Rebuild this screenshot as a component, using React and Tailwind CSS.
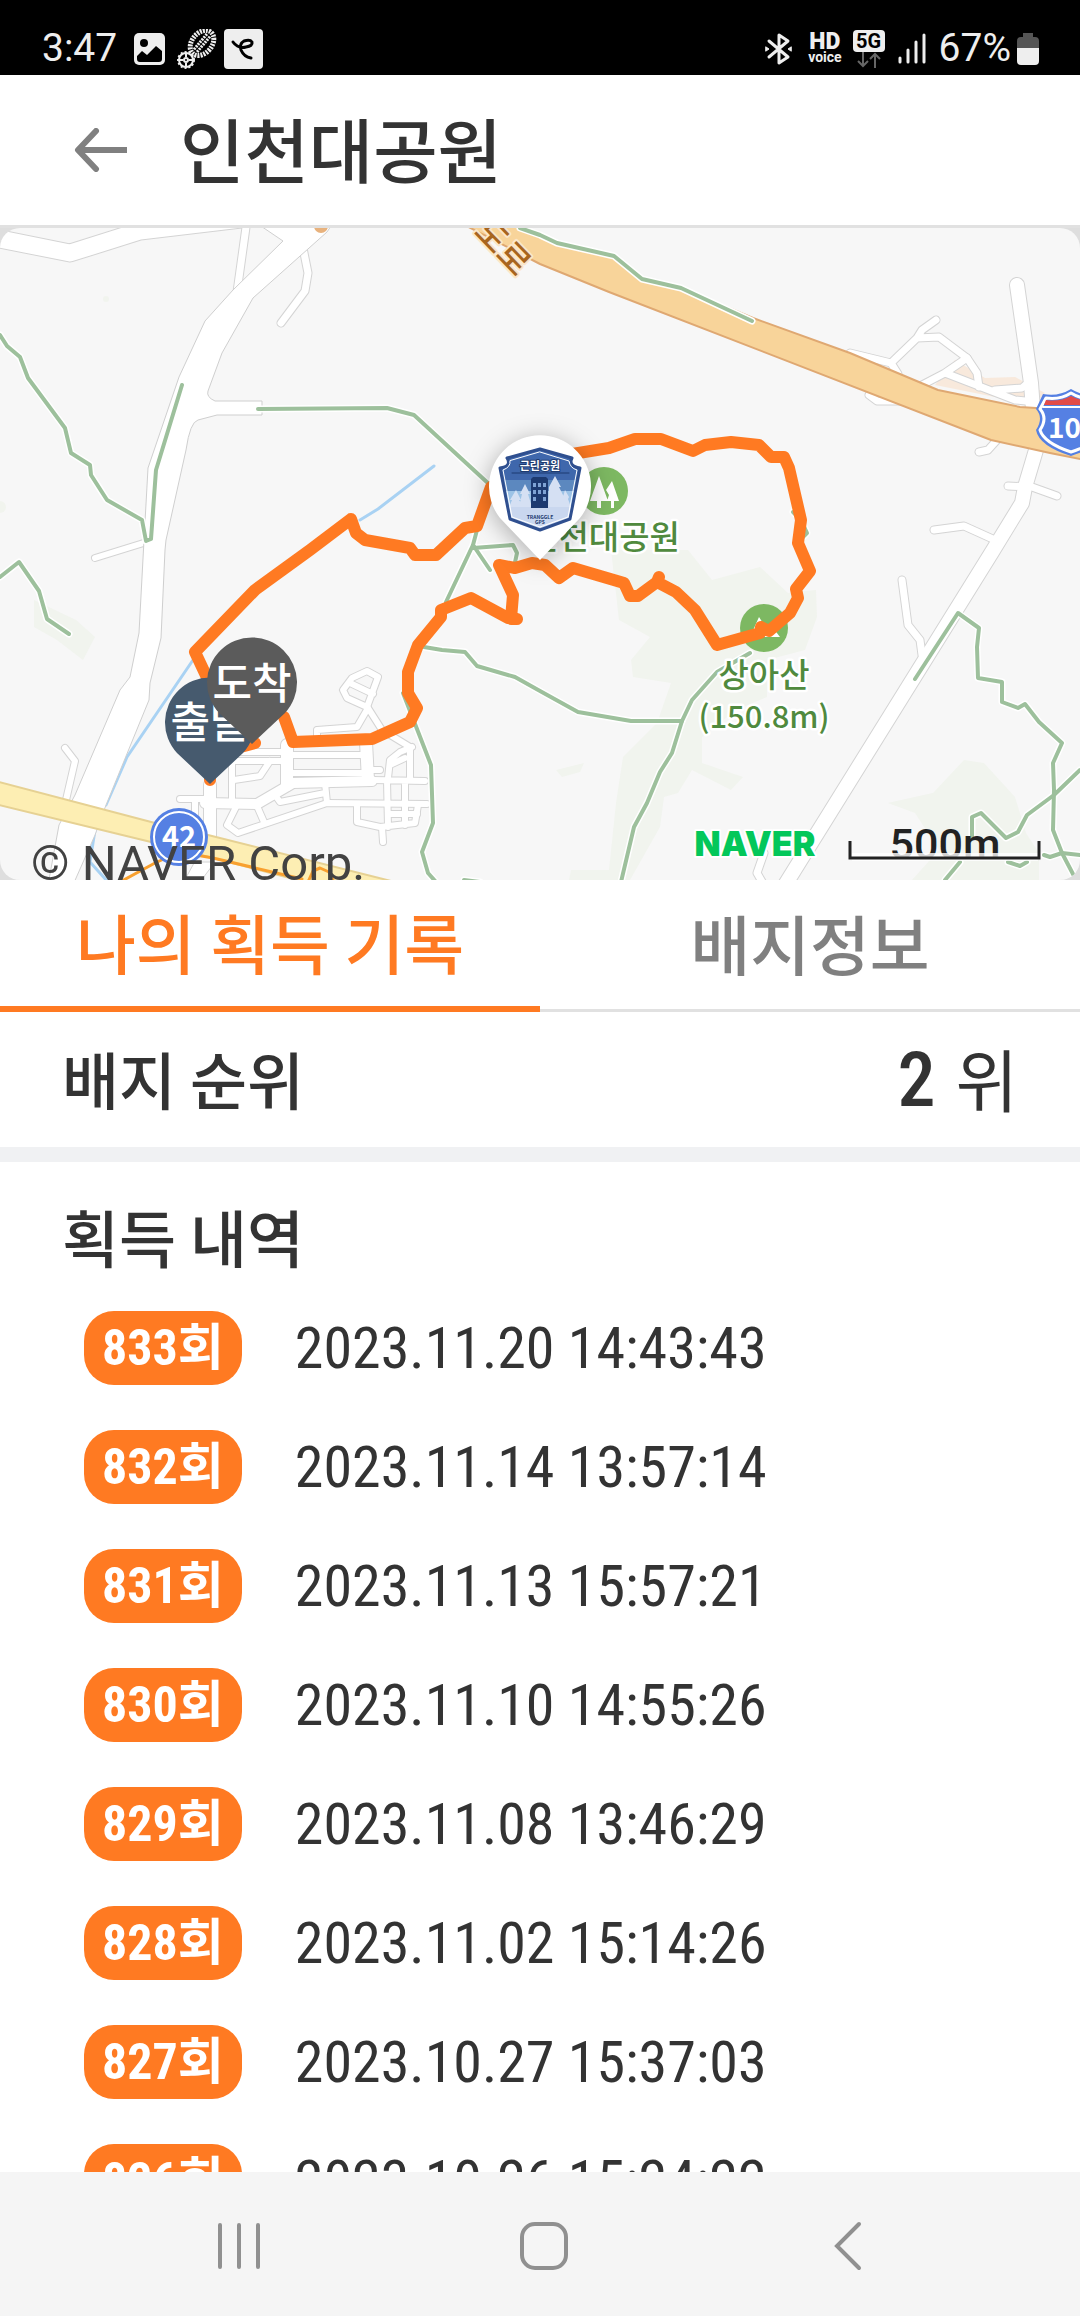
import { useState } from 'react';

const records = [
  { count: 833, date: '2023.11.20 14:43:43' },
  { count: 832, date: '2023.11.14 13:57:14' },
  { count: 831, date: '2023.11.13 15:57:21' },
  { count: 830, date: '2023.11.10 14:55:26' },
  { count: 829, date: '2023.11.08 13:46:29' },
  { count: 828, date: '2023.11.02 15:14:26' },
  { count: 827, date: '2023.10.27 15:37:03' },
  { count: 826, date: '2023.10.26 15:24:22' },
];

const tabs = [
  { key: 'record', name: '나의 획득 기록' },
  { key: 'info', name: '배지정보' },
];

// [path, width]
const roads = [
  ['M-5 238L70 253L140 231L250 218', 17],
  ['M247 220L237 292', 7],
  ['M303 248L308 273L305 291L281 323', 7],
  ['M95 558L150 541', 6],
  ['M65 748L75 761L66 800', 6],
  ['M1017 285L1031 383L1036 450L1025 487L1022 503L992 552L785 885', 14],
  ['M850 353L891 363L898 374M891 363L917 338L939 337L967 358L977 373L979 387M917 338L922 330L936 320', 7],
  ['M967 358L945 373L922 385M945 373L1015 400L1035 402M995 390L1022 388L1031 380', 7],
  ['M869 395L877 401L905 401M979 452L988 450L997 440M1008 486L1032 487L1057 496', 7],
  ['M934 530L964 526L995 540M902 580L908 625L920 640L922 655M764 853L757 873L764 885', 7],
];

const streets = [
  ['M367 671L378 677L367 707L347 698L343 690L352 678ZM352 684L373 694', 6],
  ['M368 708L357 727L317 730L317 742M368 708L382 730L410 747L410 780', 6],
  ['M232 748L232 800M232 752L290 752M232 761L287 761M270 761L260 776L234 780M287 755L365 755M287 773L365 773', 6],
  ['M287 745L287 785M366 742L368 780M210 785L210 836', 12],
  ['M372 781L293 783L257 804L205 803', 10],
  ['M180 799L207 799M195 800L195 820M237 805L227 825L238 833L327 803L427 804', 6],
  ['M257 806L264 822M275 795L280 802L325 793M325 783L327 803', 6],
  ['M373 780L425 781M387 780L388 827M405 781L405 825M357 805L357 822L380 827L415 823L418 805', 6],
  ['M382 827L383 842M388 778L390 760L400 752L412 747M390 765L405 758M388 814L417 814M368 770L380 770', 6],
];

const trails = [
  'M0 335L7 346L20 357L28 378L65 428L71 453L90 465L91 475L107 500L142 520L146 541L151 539L156 470L182 385',
  'M0 577L19 562L39 591L47 619L69 634',
  'M258 409L387 408L414 415L490 485',
  'M477 530L473 545L446 602M473 545L490 570M473 548L513 545L517 553L514 567',
  'M424 647L442 650L465 652L477 666L515 677L540 691L578 712L631 721L682 721',
  'M403 693L431 765L433 823L422 852L428 873L436 882M464 880L480 882',
  'M750 653L717 672L692 700L682 721L672 753L660 772L647 803L634 827L621 882',
  'M520 228L540 235L557 243L614 256L642 279L681 288L752 321',
  'M915 679L958 613L979 628L977 647L978 678L1002 682L1002 702L1018 708L1025 704L1039 722L1062 743L1053 763L1054 790L1053 830L1062 853L1074 876',
  'M1080 770L1054 795L1027 815L1018 832L1006 838L981 813L972 817L972 837M945 880L960 862M1008 862L1020 866L1027 862M1044 855L1050 857L1062 853L1080 855',
  'M793 512L801 520L807 533L800 540',
];

const mainRoad =
  'M252 220L283 241L233 290L205 321L179 377L148 468L144 540L139 633L130 677L120 690L75 795L59 825L48 885L73 885L95 835L106 805L149 700L150 683L161 638L165 550L166 540L186 450Q190 422 198 420L217 415L262 415L262 401L215 401Q206 397 208 391L222 353L253 298L327 232L335 220Z';

const route =
  'M210 780L210 755L248 745L255 743M284 717L293 742L372 739L410 722L417 708L408 693L408 672L418 645L441 617L441 610L471 598L508 618L517 619L511 619L513 595L499 565L515 568L532 563L545 565L559 578L573 568L624 583L630 596L638 596L657 582L659 577L657 582L676 592L695 610L717 645L760 633L761 627L769 631L790 613L798 598L796 589L810 571L798 543L801 520L789 468L784 457L771 457L759 445L731 442L705 445L693 451L661 439L635 439L609 448L560 456L491 487L477 526L465 528L436 555L415 555L410 548L365 540L356 533L351 519L310 550L255 590L195 652L210 684';

const pinShape = 'M0 62L-33 31A45 45 0 1 1 33 31Z';

const Network = ({ lines }) => (
  <>
    {lines.map(([d, w]) => (
      <path key={`c${d}`} d={d} stroke="#d4d4d4" strokeWidth={w + 2} />
    ))}
    {lines.map(([d, w]) => (
      <path key={d} d={d} stroke="#fff" strokeWidth={w} />
    ))}
  </>
);

const ParkBadge = () => (
  <g>
    <path d="M540 449L572 458Q568 466 579 468L581 467L570 520L540 531L510 520L499 467Q512 466 507 458Z" fill="#c9d7ef" />
    <path d="M540 449L572 458Q568 466 579 468L576 484L504 484L501 468Q512 466 507 458Z" fill="#3f67ac" />
    <path d="M503 480L577 480L575 491L505 491Z" fill="#5c88bf" />
    <path d="M505 491L575 491L573 507L507 507Z" fill="#9dc3e6" />
    <path d="M516 490L521 500L519 500L524 507L509 507L512 500L510 500ZM525 484L530 494L528 494L532 507L519 507L522 494L520 494ZM555 476L561 487L559 487L564 497L560 507L548 507L549 487ZM565 490L569 497L568 499L571 507L560 507Z" fill="#d5e0f3" />
    <path d="M531 479L533 477L546 477L548 479L548 508L531 508Z" fill="#1d3a70" />
    <path d="M533 483h3v4h-3zM538 483h3v4h-3zM543 483h3v4h-3zM533 490h3v4h-3zM538 490h3v4h-3zM543 490h3v4h-3zM533 497h3v4h-3zM543 497h3v4h-3z" fill="#7fa3d4" />
    <path d="M512 473L569 473" stroke="#1d3a70" strokeWidth="1" />
    <path d="M540 449L572 458Q568 466 580 468L570 519L540 530L510 519L500 468Q512 466 507 458Z" fill="none" stroke="#2f4f8f" strokeWidth="3" />
    <path d="M540 452L569 461Q570 468 577 470L568 517L540 527L512 517L503 470Q511 467 510 461Z" fill="none" stroke="#fff" strokeWidth="1" />
    <text x="540" y="470" textAnchor="middle" fontSize="11" fontWeight="700" fill="#fff" stroke="#1d3a70" strokeWidth="2" paintOrder="stroke">근린공원</text>
    <text x="540" y="519" textAnchor="middle" fontSize="5" fontWeight="700" fill="#1d3a70">TRANGGLE</text>
    <text x="540" y="524" textAnchor="middle" fontSize="5" fontWeight="700" fill="#1d3a70">GPS</text>
  </g>
);

const CourseMap = () => (
  <svg
    viewBox="0 228 1080 652"
    preserveAspectRatio="xMidYMid slice"
    className="block w-full h-full rounded-[20px] bg-[#f7f7f7] font-['Noto_Sans_CJK_KR',sans-serif]"
    fill="none"
    strokeLinejoin="round"
    strokeLinecap="round"
    role="img"
    aria-label="인천대공원 코스 지도"
  >
    {/* Forest */}
    <g fill="#f1f4ee">
      <path d="M611 550L688 550L712 580L760 567L788 593L816 590L817 617L805 650L767 660L767 697L736 710L702 737L702 763L743 777L731 790L692 770L678 793L664 797L660 827L630 880L569 880L571 870L609 870L616 803L623 757L657 723L671 683L633 677L631 660L650 637L619 620Z" />
      <path d="M888 803L933 793L964 760L984 763L1015 797L1026 833L1039 853L1039 880L912 880L939 850L915 813Z" />
      <path d="M34 600L76 620L95 637L83 660L57 640L34 627Z" />
      <circle cx="106" cy="299" r="3" />
      <circle cx="0" cy="507" r="6" />
      <path d="M556 770L584 763L580 772L562 777Z" />
    </g>
    <path d="M935 385L955 360L985 378L1015 377L1045 393L1035 405L1000 398Z" fill="#f8e9dc" />

    {/* Streams */}
    <path d="M434 466L378 509L360 520M258 592L250 598M193 660L127 757L106 805M95 830L90 862L108 882" stroke="#a9d2f3" strokeWidth="3" />

    <Network lines={roads} />
    <path d={mainRoad} fill="#fff" stroke="#cfcfcf" strokeWidth="1" />
    <Network lines={streets} />
    <path d="M195 862L215 862L200 882L184 882Z" fill="#fff" stroke="#d4d4d4" />

    {/* Highways */}
    <path d="M455 220L540 264L609 292L991 440L1050 453L1085 460L1085 413L1036 408L1020 407L938 390L850 353L753 318L681 288L642 279L614 258L557 245L505 220Z" fill="#f8d49a" stroke="#dfa872" strokeWidth="2" />
    <circle cx="321" cy="226" r="7" fill="#e8b27d" />
    <path d="M-5 781L155 823L208 835L395 882L305 882L151 842L-5 804Z" fill="#fdeeb3" stroke="#e6d193" strokeWidth="2" />
    <path d="M120 882L155 863L179 852L213 858L302 879M308 882L313 871L320 868L329 872L334 882" stroke="#f8a02f" strokeWidth="3" />

    {/* Trails */}
    {trails.map((d) => (
      <path key={`h${d}`} d={d} stroke="#fff" strokeWidth="7" />
    ))}
    {trails.map((d) => (
      <path key={d} d={d} stroke="#9dc09c" strokeWidth="4" />
    ))}

    {/* Place labels */}
    <g transform="translate(500 250) rotate(46)" fontSize="34" fontWeight="500" fill="#a8651e" stroke="#fbe6c8" strokeWidth="4" paintOrder="stroke">
      <text x="0" y="8" textAnchor="middle">도로</text>
    </g>
    <circle cx="604" cy="491" r="24" fill="#7db862" />
    <path d="M599 476L608 501L601 501L601 508L597 508L597 501L590 501ZM612 481L619 501L614 501L614 508L611 508L611 501L607 501L609 495L606 490Z" fill="#fff" />
    <circle cx="764" cy="628" r="24" fill="#7db862" />
    <path d="M759 617L766 628L770 624L780 637L750 637Z" fill="#fff" />
    <g textAnchor="middle" fontSize="33" fontWeight="500" fill="#508a3e" stroke="#fff" strokeWidth="5" paintOrder="stroke">
      <text x="604" y="549">인천대공원</text>
      <text x="764" y="687">상아산</text>
      <text x="764" y="728" fontSize="31">(150.8m)</text>
    </g>

    {/* Route shields */}
    <circle cx="179" cy="837" r="29" fill="#5580e3" />
    <circle cx="179" cy="837" r="25" stroke="#fff" strokeWidth="2" />
    <text x="179" y="847" textAnchor="middle" fontSize="29" fontWeight="700" fill="#fff">42</text>
    <path d="M1043 394Q1058 397 1071 389Q1084 397 1099 394L1106 409Q1098 418 1105 430Q1103 446 1071 456Q1039 446 1036 430Q1044 418 1036 409Z" fill="#5580e3" />
    <path d="M1046 398Q1060 400 1071 393Q1082 400 1096 398L1102 409Q1094 418 1101 430Q1098 443 1071 452Q1044 443 1040 430Q1048 418 1040 409Z" fill="#5580e3" stroke="#fff" strokeWidth="3" />
    <path d="M1044 405L1046 400Q1060 402 1071 396Q1082 402 1096 400L1098 405Z" fill="#e24b48" />
    <path d="M1043 407L1098 407" stroke="#fff" strokeWidth="2" />
    <text x="1048" y="438" fontSize="28" fontWeight="700" fill="#fff">10</text>

    {/* Recorded course */}
    <path d={route} stroke="#ff7a22" strokeWidth="12" />

    {/* Pins */}
    <g fontSize="43" fontWeight="500" textAnchor="middle">
      <path d={pinShape} transform="translate(210 722)" fill="#465a6e" />
      <text x="210" y="738" fill="#fff">출발</text>
      <path d={pinShape} transform="translate(252 682)" fill="#5b5b5b" />
      <text x="252" y="699" fill="#fff">도착</text>
    </g>
    <path
      d="M540 560L500 518A51 51 0 1 1 580 518Z"
      fill="#fff"
      className="drop-shadow-[0_4px_12px_rgba(0,0,0,0.3)]"
    />
    <ParkBadge />

    {/* Map credits */}
    <text x="755" y="856" textAnchor="middle" className="font-['Inter',sans-serif]" fontSize="34" fontWeight="900" fill="#03c75a" stroke="#fff" strokeWidth="4" paintOrder="stroke">NAVER</text>
    <text x="945" y="859" textAnchor="middle" className="font-['Roboto',sans-serif]" fontSize="43" fontWeight="500" fill="#222">500m</text>
    <path d="M852 857L1038 857" stroke="#fff" strokeWidth="8" strokeLinecap="butt" strokeOpacity="0.8" />
    <path d="M850 841V858H1039V841" stroke="#222" strokeWidth="3" strokeLinecap="butt" strokeLinejoin="miter" />
    <text x="31" y="880" className="font-['Roboto',sans-serif]" fontSize="49" fill="#424242">© NAVER Corp.</text>
  </svg>
);

const StatusBar = () => (
  <div className="h-[75px] shrink-0 bg-black text-[#eee] pt-[22px] pl-[42px] pr-[41px] flex items-center justify-between font-['Roboto',sans-serif] text-[39px] leading-none">
    <div className="flex items-center">
      <span className="mr-[17px]">3:47</span>
      <svg width="31" height="32" viewBox="0 0 31 32" className="mr-[12px]">
        <rect width="31" height="32" rx="5" fill="#eee" />
        <circle cx="10" cy="10" r="4" fill="#000" />
        <path d="M3 23L8 18L13 22L22 13L28 18V26Q28 29 25 29H6Q3 29 3 26Z" fill="#000" />
      </svg>
      <svg width="40" height="40" viewBox="0 0 40 40" fill="none" stroke="#eee" className="mr-[7px]">
        <circle cx="9" cy="31" r="7" strokeWidth="2" />
        <circle cx="9" cy="31" r="8" strokeWidth="2" strokeDasharray="2 2" />
        <circle cx="9" cy="31" r="2" strokeWidth="2" />
        <path d="M9 24V28M9 34V38M2 31H6M12 31H16" strokeWidth="2" />
        <g transform="rotate(40 25 14)">
          <ellipse cx="25" cy="14" rx="10" ry="14" strokeWidth="5" strokeDasharray="2 1" />
          <path d="M23 4V24M27 4V24" strokeWidth="3" strokeDasharray="2 1" />
        </g>
      </svg>
      <svg width="39" height="40" viewBox="0 0 39 40" fill="none">
        <rect width="39" height="40" rx="4" fill="#eee" />
        <path d="M9 13Q14 20 22 18Q29 17 28 13Q26 10 20 12Q15 15 17 21Q20 28 27 29" stroke="#000" strokeWidth="3" strokeLinecap="round" />
      </svg>
    </div>
    <div className="flex items-center">
      <svg width="27" height="34" viewBox="0 0 27 34" fill="none" stroke="#eee" strokeWidth="3" strokeLinejoin="round" strokeLinecap="round" className="mr-[16px]">
        <path d="M4 9L23 25L14 31V3L23 9L4 25" />
        <path d="M1 15L4 17L1 19ZM26 15L23 17L26 19Z" strokeWidth="1" fill="#eee" />
      </svg>
      <div className="mr-[11px] flex flex-col items-center font-bold">
        <span className="text-[23px] leading-[17px] font-black">HD</span>
        <span className="text-[14px] leading-[15px]">voice</span>
      </div>
      <div className="mr-[13px] flex flex-col items-center">
        <span className="h-[22px] w-[32px] rounded-[4px] bg-[#eee] text-center text-[20px] font-bold leading-[22px] text-black">5G</span>
        <svg width="24" height="16" viewBox="0 0 24 16" fill="none" stroke="#666" strokeWidth="2">
          <path d="M6 0V14M1 9L6 14L11 9M18 16V2M13 7L18 2L23 7" />
        </svg>
      </div>
      <svg width="28" height="31" viewBox="0 0 28 31" stroke="#eee" strokeWidth="3" strokeLinecap="round" className="mr-[13px]">
        <path d="M2 25V29M10 17V29M18 9V29M26 2V29" />
      </svg>
      <span className="mr-[6px]">67%</span>
      <svg width="22" height="32" viewBox="0 0 22 32">
        <path d="M6 0H16V4H18Q22 4 22 8V15H0V8Q0 4 4 4H6Z" fill="#555" />
        <path d="M0 15H22V28Q22 32 18 32H4Q0 32 0 28Z" fill="#eee" />
      </svg>
    </div>
  </div>
);

const NavigationBar = () => (
  <nav className="h-[144px] shrink-0 bg-[#f5f5f5] pt-1 pl-[88px] pr-[80px] grid grid-cols-3 place-items-center">
    <button type="button" aria-label="최근 앱">
      <svg width="48" height="48" viewBox="0 0 48 48" stroke="#909090" strokeWidth="4" strokeLinecap="round">
        <path d="M4 3V45M23 3V45M42 3V45" />
      </svg>
    </button>
    <button type="button" aria-label="홈">
      <svg width="48" height="48" viewBox="0 0 48 48" fill="none" stroke="#909090" strokeWidth="4">
        <rect x="2" y="2" width="44" height="44" rx="13" />
      </svg>
    </button>
    <button type="button" aria-label="뒤로">
      <svg width="28" height="50" viewBox="0 0 28 50" fill="none" stroke="#909090" strokeWidth="4" strokeLinecap="round">
        <path d="M25 3L3 25L25 47" />
      </svg>
    </button>
  </nav>
);

export default function App() {
  const [activeTab, setActiveTab] = useState('record');

  return (
    <div className="h-screen flex flex-col bg-white text-[#333] font-['Noto_Sans_CJK_KR',sans-serif]">
      <StatusBar />

      <header className="h-[153px] shrink-0 flex items-center pl-[74px] border-b-3 border-[#e1e1e1]">
        <button type="button" aria-label="뒤로 가기" className="mr-[52px]">
          <svg width="54" height="44" viewBox="0 0 54 44" fill="none" stroke="#808080" strokeWidth="6" strokeLinejoin="round">
            <path d="M53 22H5" />
            <path d="M22 3L4 22L22 41" strokeLinecap="round" />
          </svg>
        </button>
        <h1 className="pb-1 text-[70px] leading-none font-medium">인천대공원</h1>
      </header>

      <div className="h-[652px] shrink-0 bg-[#dedede]">
        <CourseMap />
      </div>

      <div role="tablist" className="h-[132px] shrink-0 flex">
        {tabs.map((tab) => (
          <button
            key={tab.key}
            type="button"
            role="tab"
            aria-selected={activeTab === tab.key}
            onClick={() => setActiveTab(tab.key)}
            className={`flex-1 pb-1 text-[65px] leading-none font-medium ${
              activeTab === tab.key
                ? 'text-[#ff7a22] border-b-6 border-[#ff7a22]'
                : 'text-[#808080] border-b-3 border-[#e1e1e1]'
            }`}
          >
            {tab.name}
          </button>
        ))}
      </div>

      <section className="h-[150px] shrink-0 flex items-center justify-between px-[62px] border-b-15 border-[#f0f1f3]">
        <h2 className="pb-1 text-[62px] leading-none font-medium">배지 순위</h2>
        <p className="flex items-center gap-[20px] leading-none">
          <span className="text-[76px] font-medium font-['Roboto_Condensed','Roboto',sans-serif]">2</span>
          <span className="pb-1 text-[68px]">위</span>
        </p>
      </section>

      <section className="flex-1 min-h-0 overflow-hidden">
        <h2 className="px-[62px] pt-[44px] pb-[45px] text-[62px] leading-[60px] font-medium">획득 내역</h2>
        <ul className="pl-[84px] flex flex-col gap-[45px]">
          {records.map((record) => (
            <li
              key={record.count}
              className="h-[74px] shrink-0 flex items-center font-['Roboto_Condensed','Noto_Sans_CJK_KR',sans-serif]"
            >
              <span className="h-[74px] rounded-[30px] bg-[#ff7a22] px-[18px] text-[50px] leading-[74px] font-bold text-white">
                {record.count}회
              </span>
              <time className="ml-[53px] text-[58px] leading-[74px]">{record.date}</time>
            </li>
          ))}
        </ul>
      </section>

      <NavigationBar />
    </div>
  );
}
